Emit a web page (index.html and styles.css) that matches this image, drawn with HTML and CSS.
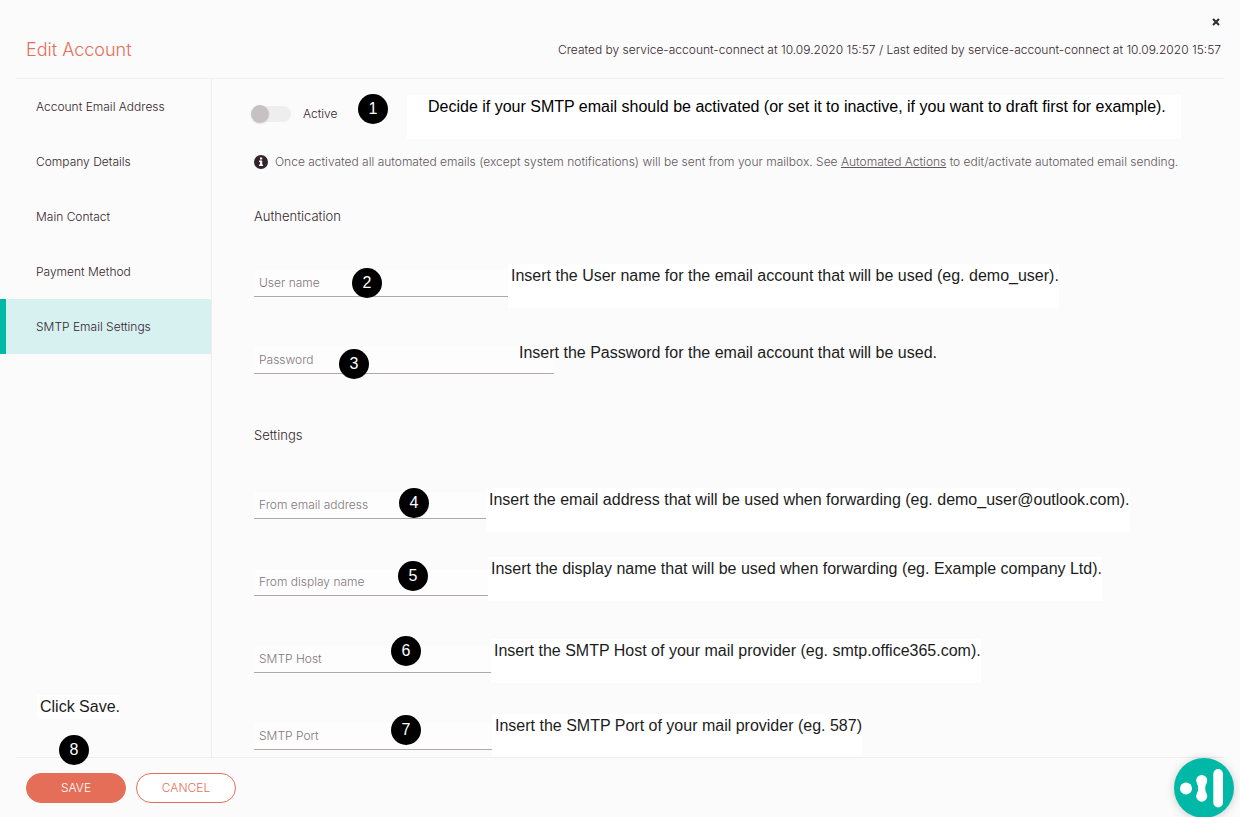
FILE: index.html
```html
<!DOCTYPE html>
<html lang="en">
<head>
    <meta charset="UTF-8">
    <meta name="viewport" content="width=device-width, initial-scale=1.0">
    <title>Edit Account</title>
    <link rel="stylesheet" href="styles.css">
</head>
<body>
    <header class="header">
        <button type="button" class="close" aria-label="Close">
            <svg width="8" height="8" viewBox="0 0 8 8"><path d="M1 1L7 7M7 1L1 7" stroke="#35242c" stroke-width="2"/></svg>
        </button>
        <h1>Edit Account</h1>
        <p class="history">Created by service-account-connect at 10.09.2020 15:57 / Last edited by service-account-connect at 10.09.2020 15:57</p>
    </header>

    <main class="main">
        <nav class="sidebar">
            <a href="#">Account Email Address</a>
            <a href="#">Company Details</a>
            <a href="#">Main Contact</a>
            <a href="#">Payment Method</a>
            <a href="#" class="active">SMTP Email Settings</a>
        </nav>

        <form class="content" id="smtp">
            <div class="toggle-row">
                <input type="checkbox" class="toggle" id="active">
                <label for="active">Active</label>
                <span class="step step-1">1</span>
                <span class="note note-1">Decide if your SMTP email should be activated (or set it to inactive, if you want to draft first for example).</span>
            </div>

            <div class="info">
                <svg width="14" height="14" viewBox="0 0 14 14"><circle cx="7" cy="7" r="7" fill="#35242c"/><path d="M6 2.500h2.200v2H6zM5 5.600h3.200v4H9v1.500H5V9.600h1V7.100H5z" fill="#fff"/></svg>
                <p>Once activated all automated emails (except system notifications) will be sent from your mailbox. See <a href="#">Automated Actions</a> to edit/activate automated email sending.</p>
            </div>

            <h2>Authentication</h2>
            <div class="field">
                <input type="text" id="user">
                <label for="user">User name</label>
                <span class="note note-2">Insert the User name for the email account that will be used (eg. demo_user).</span>
                <span class="step step-2">2</span>
            </div>
            <div class="field">
                <input type="password" id="password">
                <label for="password">Password</label>
                <span class="note note-3">Insert the Password for the email account that will be used.</span>
                <span class="step step-3">3</span>
            </div>

            <h2>Settings</h2>
            <div class="field">
                <input type="email" id="from">
                <label for="from">From email address</label>
                <span class="note note-4">Insert the email address that will be used when forwarding (eg. demo_user@outlook.com).</span>
                <span class="step step-4">4</span>
            </div>
            <div class="field">
                <input type="text" id="display">
                <label for="display">From display name</label>
                <span class="note note-5">Insert the display name that will be used when forwarding (eg. Example company Ltd).</span>
                <span class="step step-5">5</span>
            </div>
            <div class="field">
                <input type="text" id="host">
                <label for="host">SMTP Host</label>
                <span class="note note-6">Insert the SMTP Host of your mail provider (eg. smtp.office365.com).</span>
                <span class="step step-6">6</span>
            </div>
            <div class="field">
                <input type="text" id="port">
                <label for="port">SMTP Port</label>
                <span class="note note-7">Insert the SMTP Port of your mail provider (eg. 587)</span>
                <span class="step step-7">7</span>
            </div>
        </form>
    </main>

    <footer class="footer">
        <button type="submit" form="smtp" class="btn btn-save">SAVE</button>
        <button type="button" class="btn">CANCEL</button>
        <span class="note note-8">Click Save.</span>
        <span class="step step-8">8</span>
    </footer>

    <button type="button" class="chat" aria-label="Open chat">
        <svg width="60" height="60" viewBox="0 0 60 60" fill="#fff">
            <circle cx="12" cy="30.500" r="6"/>
            <circle cx="27.700" cy="22.500" r="5.500"/>
            <circle cx="27.700" cy="38.200" r="5.500"/>
            <path d="M23 25.500Q25.400 30.300 23 35.200H32.400Q30 30.300 32.400 25.500z"/>
            <rect x="39.300" y="11" width="9.700" height="38.500" rx="4.850"/>
        </svg>
    </button>
</body>
</html>
```

FILE: styles.css
```css
* {
    box-sizing: border-box;
}
body {
    display: flex;
    flex-direction: column;
    min-height: 100vh;
    margin: 0;
    background-color: #fbfbfb;
    color: #35242c;
    font-family: Inter, sans-serif;
    font-size: 12px;
    font-weight: 300;
    line-height: 20px;
}
h1, h2, p {
    margin: 0;
    font-weight: 300;
}
a {
    color: inherit;
}
button, input {
    font: inherit;
}

.header {
    position: relative;
    display: flex;
    justify-content: space-between;
    align-items: center;
    margin: 0 16px;
    padding: 36px 3px 14px 10px;
    border-bottom: 1px solid #eee;
}
.header h1 {
    color: #e56e58;
    font-size: 18px;
    line-height: 28px;
}
.close {
    position: absolute;
    top: 14px;
    right: 0;
    display: flex;
    padding: 4px;
    border: 0;
    background: none;
}

.main {
    display: flex;
    flex: 1;
}
.sidebar {
    flex: none;
    width: 212px;
    border-right: 1px solid #eee;
}
.sidebar a {
    display: flex;
    align-items: center;
    height: 55px;
    padding-left: 30px;
    border-left: 6px solid transparent;
    text-decoration: none;
}
.sidebar .active {
    border-left-color: #00b8a6;
    background-color: #d7f0f0;
}

.content {
    flex: 1;
    padding: 25px 42px 4px;
}
.content h2 {
    margin: 34px 0 44px;
    font-size: 13px;
    line-height: 20px;
}
.toggle-row {
    position: relative;
    display: flex;
    align-items: center;
    gap: 12px;
    height: 20px;
}
.toggle {
    appearance: none;
    width: 37px;
    height: 16px;
    margin: 0;
    border-radius: 8px;
    background-color: #eee;
}
.toggle::before {
    content: "";
    display: block;
    width: 18px;
    height: 18px;
    margin: -1px 0 0 -3px;
    border-radius: 50%;
    background-color: #c7c1c3;
    box-shadow: 0 1px 2px rgba(0, 0, 0, 0.1);
}
.info {
    display: flex;
    align-items: center;
    gap: 7px;
    margin-top: 28px;
    color: #62555b;
}

.field {
    position: relative;
    height: 27px;
}
.field + .field {
    margin-top: 50px;
}
.field + h2 {
    margin-top: 51px;
    margin-bottom: 47px;
}
.field input {
    display: block;
    width: 300px;
    height: 27px;
    padding: 0 5px;
    border: 0;
    border-bottom: 1px solid #afa8ab;
    background-color: #fdfdfd;
}
.field label {
    position: absolute;
    top: 3px;
    left: 5px;
    color: #82777c;
}

/* numbered steps and their explanations */
.step {
    position: absolute;
    width: 30px;
    height: 30px;
    border-radius: 50%;
    background-color: #000;
    color: #fff;
    font: 16px/30px "Liberation Sans", sans-serif;
    text-align: center;
}
.note {
    position: absolute;
    height: 44px;
    padding: 2px 0 2px 3px;
    background-color: #fff;
    color: #1c1c1c;
    font: 16px/20px "Liberation Sans", sans-serif;
    white-space: nowrap;
}
.step-1 { top: -10px; left: 104px; }
.step-2 { top: -2px; left: 98px; }
.step-3 { top: 2px; left: 85px; }
.step-4 { top: -4px; left: 145px; }
.step-5 { top: -8px; left: 144px; }
.step-6 { top: -10px; left: 137px; }
.step-7 { top: -8px; left: 137px; }
.step-8 { top: -23px; left: 43px; }
.note-1 { top: -9px; left: 153px; padding: 2px 15px 2px 21px; color: #000; }
.note-2 { top: -6px; left: 254px; }
.note-3 { top: -6px; left: 262px; height: 24px; background: none; }
.note-4 { top: -4px; left: 232px; }
.note-5 { top: -12px; left: 234px; }
.note-6 { top: -7px; left: 237px; }
.note-7 { top: -9px; left: 238px; }
.note-8 { top: -63px; left: 21px; height: 24px; }

.footer {
    position: relative;
    display: flex;
    gap: 10px;
    margin: 0 16px;
    padding: 15px 10px 14px;
    border-top: 1px solid #eee;
}
.btn {
    width: 100px;
    height: 30px;
    padding: 0;
    border: 1px solid #e56e58;
    border-radius: 15px;
    background-color: #fff;
    color: #e56e58;
}
.btn-save {
    background-color: #e56e58;
    color: #fff;
}
.chat {
    position: fixed;
    right: 6px;
    bottom: -1px;
    display: flex;
    padding: 0;
    border: 0;
    border-radius: 50%;
    background-color: #00b8a6;
    box-shadow: 0 1px 8px rgba(0, 0, 0, 0.2);
}
```
